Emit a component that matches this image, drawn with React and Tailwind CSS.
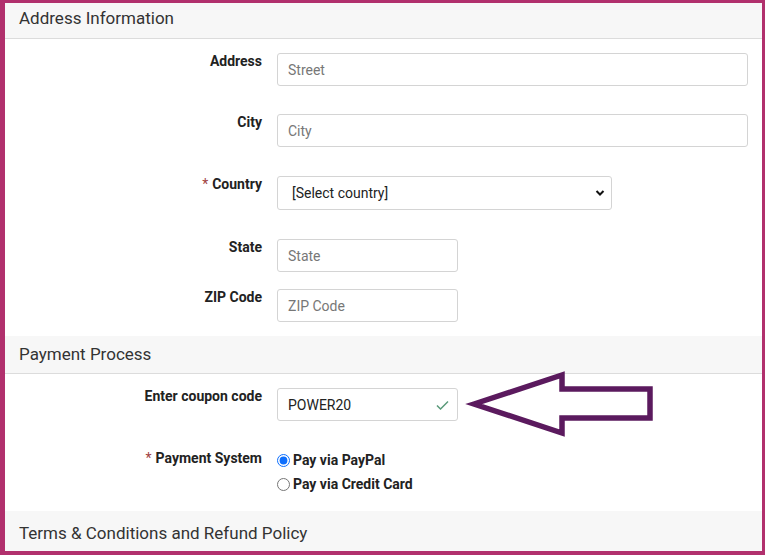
import React from 'react';

const font = { fontFamily: 'Roboto, "Liberation Sans", sans-serif' };

function Header({ title, className = "h-[38px] border-b" }) {
    return (
        <div className={"bg-[#f7f7f7] border-[#dcdcdc] pl-[14px] flex items-center text-[17px] text-[#333] " + className}>
            {title}
        </div>
    );
}

function Row({ label, required, children, className = "" }) {
    return (
        <div className={"flex items-start " + className}>
            <div className="w-[257px] text-right text-[14px] font-bold leading-[20px] text-[#222]">
                {required && <span className="text-[#a0423f] font-normal mr-[4px]">*</span>}
                {label}
            </div>
            <div className="ml-[15px] mt-[2px]">{children}</div>
        </div>
    );
}

function Field({ placeholder, width, value }) {
    return (
        <input
            type="text"
            placeholder={placeholder}
            defaultValue={value}
            className={"h-[33px] border border-[#d4d4d4] rounded-[3px] px-[10px] text-[14px] text-[#222] placeholder:text-[#777] focus:outline-none " + width}
        />
    );
}

function App() {
    return (
        <div style={font} className="bg-white w-[765px] h-[558px]">
            <div className="relative h-[555px] border-l-[5px] border-t-[3px] border-r-[3px] border-b-[4px] border-[#b1306d] bg-white overflow-hidden">
                <Header title="Address Information" className="h-[36px] pb-[3px] border-b" />
                <div className="pt-[12px] pb-[14px]">
                    <Row label="Address">
                        <Field placeholder="Street" width="w-[471px]" />
                    </Row>
                    <Row label="City" className="mt-[26px]">
                        <Field placeholder="City" width="w-[471px]" />
                    </Row>
                    <Row label="Country" required className="mt-[27px]">
                        <div className="relative w-[335px] h-[34px] border border-[#d4d4d4] rounded-[3px] flex items-center pl-[14px] text-[14px] text-[#222]">
                            [Select country]
                            <svg className="absolute right-[6px] top-[12px]" width="10" height="8" viewBox="0 0 10 8">
                                <path d="M1.5 2 L5 5.5 L8.5 2" fill="none" stroke="#111" strokeWidth="2" />
                            </svg>
                        </div>
                    </Row>
                    <Row label="State" className="mt-[27px]">
                        <Field placeholder="State" width="w-[181px]" />
                    </Row>
                    <Row label="ZIP Code" className="mt-[15px]">
                        <Field placeholder="ZIP Code" width="w-[181px]" />
                    </Row>
                </div>
                <Header title="Payment Process" />
                <div className="pt-[12px] pb-[15px]">
                    <Row label="Enter coupon code">
                        <div className="relative">
                            <Field value="POWER20" width="w-[181px]" />
                            <svg className="absolute right-[9px] top-[12px]" width="13" height="10" viewBox="0 0 13 10">
                                <path d="M1 5.5 L4.5 9 L12 1.5" fill="none" stroke="#5a9a7a" strokeWidth="1.5" />
                            </svg>
                        </div>
                    </Row>
                    <Row label="Payment System" required className="mt-[27px]">
                        <div className="-mt-[2px] text-[14px] font-bold text-[#222] leading-[24px]">
                            <label className="flex items-center gap-[3px]">
                                <input type="radio" name="pay" defaultChecked className="w-[13px] h-[13px] accent-[#0d6efd] m-0" />
                                Pay via PayPal
                            </label>
                            <label className="flex items-center gap-[3px]">
                                <input type="radio" name="pay" className="w-[13px] h-[13px] m-0" />
                                Pay via Credit Card
                            </label>
                        </div>
                    </Row>
                </div>
                <Header title="Terms & Conditions and Refund Policy" className="h-[44px] pt-[2px]" />
                <svg className="absolute left-0 top-0 pointer-events-none" width="757" height="548" viewBox="5 3 757 548">
                    <polygon
                        points="474,404 562,375 562,389 650,389 650,418 562,418 562,433"
                        fill="none"
                        stroke="#5b1a5e"
                        strokeWidth="5.5"
                        strokeLinejoin="miter"
                    />
                </svg>
            </div>
        </div>
    );
}

export default App;
